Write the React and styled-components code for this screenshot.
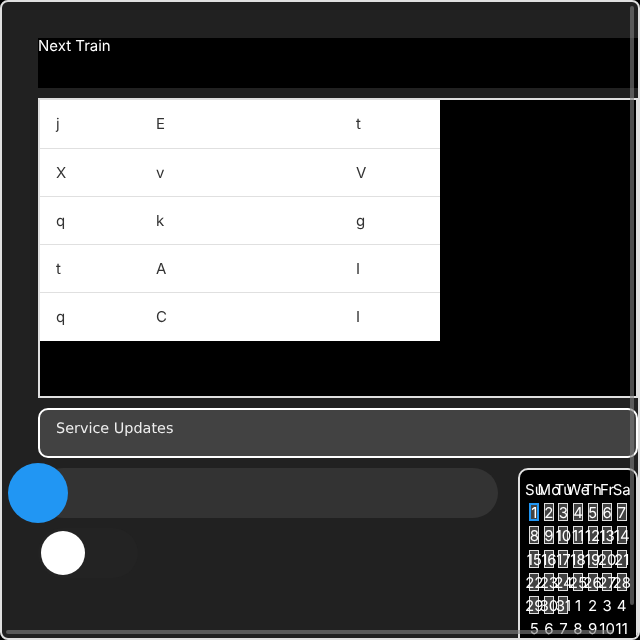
import React from "react";
import styled, { createGlobalStyle } from "styled-components";

const GlobalStyle = createGlobalStyle`
  html, body {
    margin: 0;
    padding: 0;
    background: #000;
  }
  * {
    box-sizing: border-box;
  }
`;

const Frame = styled.div`
  position: relative;
  width: 640px;
  height: 640px;
  padding: 36px 0 0 36px;
  overflow: hidden;
  background: #212121;
  border: 2px solid #e0e0e0;
  border-radius: 8px;
  font-family: Inter, sans-serif;
  font-size: 15px;
  text-rendering: geometricPrecision;
  will-change: transform;
  color: #fff;
`;

const NextTrain = styled.div`
  width: 600px;
  height: 50px;
  line-height: 15px;
  background: #000;
`;

const TableBox = styled.div`
  width: 600px;
  height: 300px;
  margin-top: 10px;
  background: #000;
  border: 2px solid #e0e0e0;
`;

const Table = styled.table`
  width: 400px;
  border-collapse: collapse;
  background: #fff;
  color: #333;
  table-layout: fixed;
  font-size: inherit;
`;

const Cell = styled.td`
  width: ${(props) => props.$w}px;
  height: 48px;
  padding: 0 16px;
  border-bottom: 1px solid #e0e0e0;
  tr:last-child & {
    height: 49px;
    padding-bottom: 1px;
    border-bottom: none;
  }
`;

const Updates = styled.div`
  width: 600px;
  height: 50px;
  margin-top: 10px;
  padding: 11px 16px 0;
  font-family: "DejaVu Sans", sans-serif;
  font-size: 14.4px;
  color: #eee;
  background: #424242;
  border: 2px solid #fff;
  border-radius: 10px;
`;

const Bottom = styled.div`
  display: flex;
  align-items: flex-start;
  gap: 20px;
  margin-top: 10px;
`;

const Controls = styled.div`
  display: flex;
  flex-direction: column;
  gap: 10px;
`;

const SliderTrack = styled.div`
  position: relative;
  width: 460px;
  height: 50px;
  background: #333;
  border-radius: 25px;
`;

const SliderThumb = styled.div`
  position: absolute;
  left: -30px;
  top: -5px;
  width: 60px;
  height: 60px;
  border-radius: 50%;
  background: #2196f3;
`;

const ToggleTrack = styled.div`
  display: flex;
  align-items: center;
  width: 100px;
  height: 50px;
  padding-left: 3px;
  background: #232323;
  border-radius: 25px;
`;

const ToggleThumb = styled.div`
  width: 44px;
  height: 44px;
  border-radius: 50%;
  background: #fff;
`;

const Calendar = styled.div`
  flex: none;
  width: 120px;
  height: 200px;
  padding: 10px 7px;
  background: #000;
  border: 2px solid #e0e0e0;
  border-radius: 10px;
`;

const Grid = styled.div`
  display: grid;
  grid-template-columns: repeat(7, minmax(0, 1fr));
  grid-auto-rows: 18px;
  row-gap: 5.2px;
`;

const Weekday = styled.div`
  display: flex;
  justify-content: center;
  align-items: center;
  white-space: nowrap;
`;

const Day = styled.div`
  display: flex;
  justify-content: center;
  align-items: center;
  width: 10px;
  height: 18px;
  margin: 0 auto;
  padding-top: 1px;
  white-space: nowrap;
  color: #fff;
  background: ${(props) => (props.$muted ? "transparent" : "#424242")};
  border: ${(props) =>
    props.$muted
      ? "none"
      : props.$selected
      ? "2px solid #2196f3"
      : "1px solid #e0e0e0"};
`;

const ScrollV = styled.div`
  position: absolute;
  right: 4px;
  top: 4px;
  width: 4px;
  height: 599px;
  border-radius: 2px;
  background: rgba(128, 128, 128, 0.6);
`;

const ScrollH = styled.div`
  position: absolute;
  left: 4px;
  bottom: 4px;
  width: 607px;
  height: 4px;
  border-radius: 2px;
  background: rgba(128, 128, 128, 0.6);
`;

const rows = [
  ["j", "E", "t"],
  ["X", "v", "V"],
  ["q", "k", "g"],
  ["t", "A", "I"],
  ["q", "C", "I"],
];

const widths = [100, 200, 100];
const weekdays = ["Su", "Mo", "Tu", "We", "Th", "Fr", "Sa"];
const days = Array.from({ length: 31 }, (_, i) => i + 1);
const trailing = [1, 2, 3, 4, 5, 6, 7, 8, 9, 10, 11];

export default function App() {
  return (
    <>
      <GlobalStyle />
      <Frame>
        <NextTrain>Next Train</NextTrain>
        <TableBox>
          <Table>
            <tbody>
              {rows.map((row, i) => (
                <tr key={i}>
                  {row.map((text, j) => (
                    <Cell key={j} $w={widths[j]}>
                      {text}
                    </Cell>
                  ))}
                </tr>
              ))}
            </tbody>
          </Table>
        </TableBox>
        <Updates>Service Updates</Updates>
        <Bottom>
          <Controls>
            <SliderTrack>
              <SliderThumb />
            </SliderTrack>
            <ToggleTrack>
              <ToggleThumb />
            </ToggleTrack>
          </Controls>
          <Calendar>
            <Grid>
              {weekdays.map((d) => (
                <Weekday key={d}>{d}</Weekday>
              ))}
              {days.map((d) => (
                <Day key={d} $selected={d === 1}>
                  {d}
                </Day>
              ))}
              {trailing.map((d) => (
                <Day key={"next" + d} $muted>
                  {d}
                </Day>
              ))}
            </Grid>
          </Calendar>
        </Bottom>
        <ScrollV />
        <ScrollH />
      </Frame>
    </>
  );
}
